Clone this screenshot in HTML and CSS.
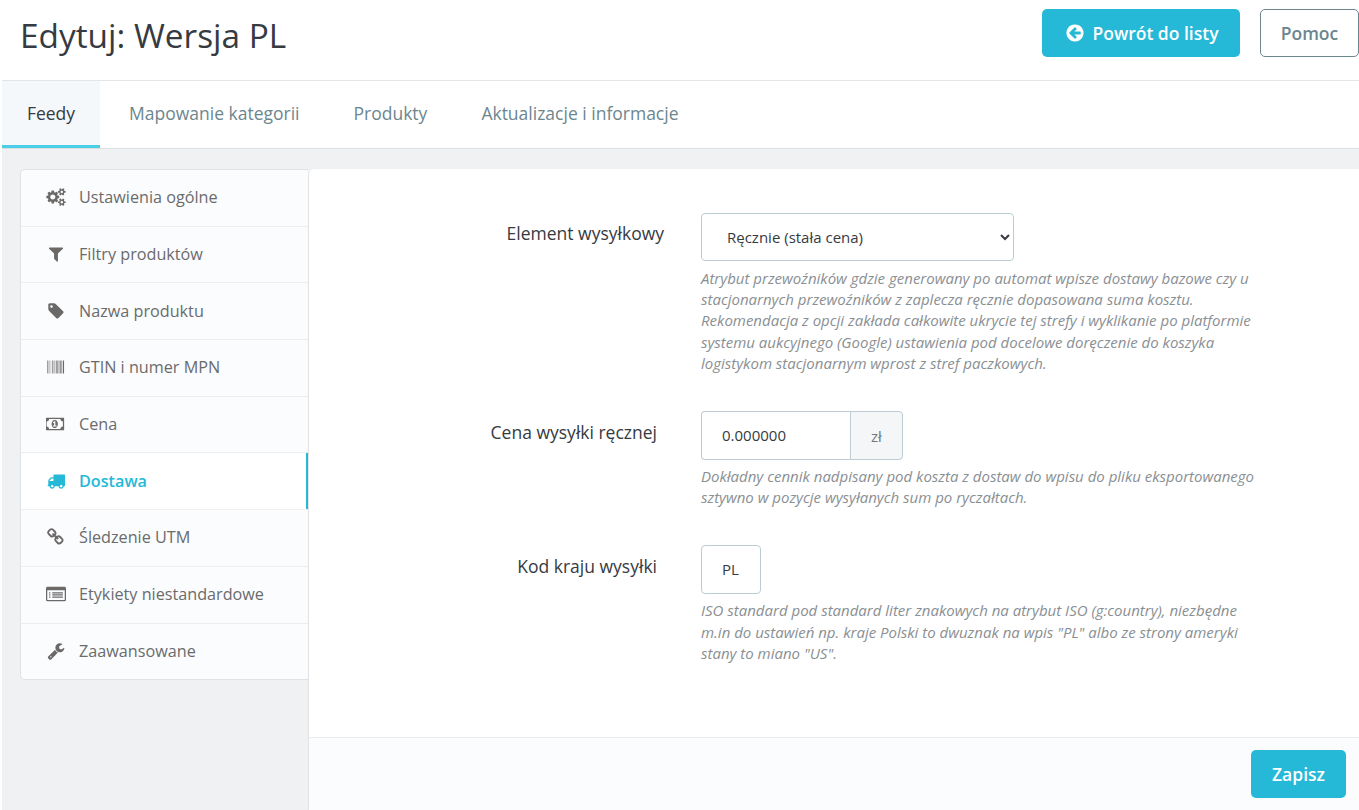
FILE: index.html
```html
<!DOCTYPE html>
<html lang="pl">
<head>
<meta charset="utf-8">
<title>Edytuj: Wersja PL</title>
<link rel="stylesheet" href="styles.css">
</head>
<body>
<div class="page">
  <header class="header">
    <h1 class="title">Edytuj: Wersja PL</h1>
    <div class="actions">
      <a class="btn btn-primary btn-back"><svg class="btn-icon" viewBox="0 0 1792 1792"><path d="M1408 960v-128q0-26-19-45t-45-19h-502l189-189q19-19 19-45t-19-45l-91-91q-18-18-45-18t-45 18l-362 362-91 91q-18 18-18 45t18 45l91 91 362 362q18 18 45 18t45-18l91-91q18-18 18-45t-18-45l-189-189h502q26 0 45-19t19-45zm256-64q0 209-103 385.5t-279.5 279.5-385.5 103-385.5-103-279.5-279.5-103-385.5 103-385.5 279.5-279.5 385.5-103 385.5 103 279.5 279.5 103 385.5z"/></svg>Powrót do listy</a>
      <a class="btn btn-outline">Pomoc</a>
    </div>
  </header>
  <nav class="tabs">
    <a class="tab tab-active">Feedy</a>
    <a class="tab">Mapowanie kategorii</a>
    <a class="tab">Produkty</a>
    <a class="tab">Aktualizacje i informacje</a>
  </nav>
  <main class="content">
    <ul class="side">
      <li class="side-item"><svg class="side-icon" viewBox="0 0 1920 1792"><path d="M896 896q0-106-75-181t-181-75-181 75-75 181 75 181 181 75 181-75 75-181zm768 512q0-52-38-90t-90-38-90 38-38 90q0 53 37.5 90.5t90.5 37.5 90.5-37.5 37.5-90.5zm0-1024q0-52-38-90t-90-38-90 38-38 90q0 53 37.5 90.5t90.5 37.5 90.5-37.5 37.5-90.5zm-384 421v185q0 10-7 19.5t-16 10.5l-155 24q-11 35-32 76 34 48 90 115 7 11 7 20 0 12-7 19-23 30-82.5 89.5t-78.5 59.5q-11 0-21-7l-115-90q-37 19-77 31-11 108-23 155-7 24-30 24h-186q-11 0-20-7.5t-10-17.5l-23-153q-34-10-75-31l-118 89q-7 7-20 7-11 0-21-8-144-133-144-160 0-9 7-19 10-14 41-53t47-61q-23-44-35-82l-152-24q-10-1-17-9.5t-7-19.5v-185q0-10 7-19.5t16-10.5l155-24q11-35 32-76-34-48-90-115-7-11-7-20 0-12 7-20 22-30 82-89t79-59q11 0 21 7l115 90q34-18 77-32 11-108 23-154 7-24 30-24h186q11 0 20 7.5t10 17.5l23 153q34 10 75 31l118-89q8-7 20-7 11 0 21 8 144 133 144 160 0 8-7 19-12 16-42 54t-45 60q23 48 34 82l152 23q10 2 17 10.5t7 19.5zm640 533v140q0 16-149 31-12 27-30 52 51 113 51 138 0 4-4 7-122 71-124 71-8 0-46-47t-52-68q-20 2-30 2t-30-2q-14 21-52 68t-46 47q-2 0-124-71-4-3-4-7 0-25 51-138-18-25-30-52-149-15-149-31v-140q0-16 149-31 13-29 30-52-51-113-51-138 0-4 4-7 4-2 35-20t59-34 30-16q8 0 46 46.5t52 67.5q20-2 30-2t30 2q51-71 92-112l6-2q4 0 124 70 4 3 4 7 0 25-51 138 17 23 30 52 149 15 149 31zm0-1024v140q0 16-149 31-12 27-30 52 51 113 51 138 0 4-4 7-122 71-124 71-8 0-46-47t-52-68q-20 2-30 2t-30-2q-14 21-52 68t-46 47q-2 0-124-71-4-3-4-7 0-25 51-138-18-25-30-52-149-15-149-31v-140q0-16 149-31 13-29 30-52-51-113-51-138 0-4 4-7 4-2 35-20t59-34 30-16q8 0 46 46.5t52 67.5q20-2 30-2t30 2q51-71 92-112l6-2q4 0 124 70 4 3 4 7 0 25-51 138 17 23 30 52 149 15 149 31z"/></svg>Ustawienia ogólne</li>
      <li class="side-item"><svg class="side-icon" viewBox="0 0 1792 1792"><path d="M1595 295q17 41-14 70l-493 493v742q0 42-39 59-13 5-25 5-27 0-45-19l-256-256q-19-19-19-45v-486l-493-493q-31-29-14-70 17-39 59-39h1280q42 0 59 39z"/></svg>Filtry produktów</li>
      <li class="side-item"><svg class="side-icon" viewBox="0 0 1792 1792"><path d="M576 448q0-53-37.5-90.5t-90.5-37.5-90.5 37.5-37.5 90.5 37.5 90.5 90.5 37.5 90.5-37.5 37.5-90.5zm1067 576q0 53-37 90l-491 492q-39 37-91 37-53 0-90-37l-715-716q-38-37-64.5-101t-26.5-117v-416q0-52 38-90t90-38h416q53 0 117 26.5t102 64.5l715 714q37 39 37 91z"/></svg>Nazwa produktu</li>
      <li class="side-item"><svg class="side-icon" viewBox="0 0 1792 1792"><path d="M63 1536h-63v-1280h63v1280zm63-1v-1279h32v1279h-32zm94 0v-1279h31v1279h-31zm157 0v-1279h31v1279h-31zm157 0v-1279h63v1279h-63zm126 0v-1279h31v1279h-31zm63 0v-1279h31v1279h-31zm63 0v-1279h31v1279h-31zm125 0v-1279h63v1279h-63zm126 0v-1279h63v1279h-63zm126 0v-1279h63v1279h-63zm126 0v-1279h63v1279h-63zm94 0v-1279h63v1279h-63zm189 0v-1279h94v1279h-94zm125 1h-63v-1280h63v1280z"/></svg>GTIN i numer MPN</li>
      <li class="side-item"><svg class="side-icon" viewBox="0 0 2048 1792"><path d="M704 1152h384v-96h-128v-448h-114l-148 137 77 80q42-37 55-57h2v288h-128v96zm512-256q0 70-21 142t-59.5 134-101.5 101-138 39-138-39-101.5-101-59.5-134-21-142 21-142 59.5-134 101.5-101 138-39 138 39 101.5 101 59.5 134 21 142zm512 256v-512q-106 0-181-75t-75-181h-1152q0 106-75 181t-181 75v512q106 0 181 75t75 181h1152q0-106 75-181t181-75zm128-832v1152q0 26-19 45t-45 19h-1792q-26 0-45-19t-19-45v-1152q0-26 19-45t45-19h1792q26 0 45 19t19 45z"/></svg>Cena</li>
      <li class="side-item side-active"><svg class="side-icon" viewBox="0 0 1792 1792"><path d="M640 1408q0-52-38-90t-90-38-90 38-38 90 38 90 90 38 90-38 38-90zm-384-512h384v-256h-158q-13 0-22 9l-195 195q-9 9-9 22v30zm1280 512q0-52-38-90t-90-38-90 38-38 90 38 90 90 38 90-38 38-90zm256-1088v1024q0 15-4 26.5t-13.5 18.5-16.5 11.5-23.5 6-22.5 2-25.5 0-22.5-.5q0 106-75 181t-181 75-181-75-75-181h-384q0 106-75 181t-181 75-181-75-75-181h-64q-3 0-22.5.5t-25.5 0-22.5-2-23.5-6-16.5-11.5-13.5-18.5-4-26.5q0-26 19-45t45-19v-320q0-8-.5-35t0-38 2.5-34.5 6.5-37 14-30.5 22.5-30l198-198q19-19 50.5-32t58.5-13h160v-192q0-26 19-45t45-19h1024q26 0 45 19t19 45z"/></svg>Dostawa</li>
      <li class="side-item"><svg class="side-icon" viewBox="0 0 1792 1792"><path d="M1456 1216q0-40-28-68l-208-208q-28-28-68-28-42 0-72 32 3 3 19 18.5t21.5 21.5 15 19 13 25.5 3.5 27.5q0 40-28 68t-68 28q-15 0-27.5-3.5t-25.5-13-19-15-21.5-21.5-18.5-19q-33 31-33 73 0 40 28 68l206 207q27 27 68 27 40 0 68-26l147-146q28-28 28-67zm-703-705q0-40-28-68l-206-207q-28-28-68-28-39 0-68 27l-147 146q-28 28-28 67 0 40 28 68l208 208q27 27 68 27 42 0 72-31-3-3-19-18.5t-21.5-21.5-15-19-13-25.5-3.5-27.5q0-40 28-68t68-28q15 0 27.5 3.5t25.5 13 19 15 21.5 21.5 18.5 19q33-31 33-73zm895 705q0 120-85 203l-147 146q-83 83-203 83-121 0-204-85l-206-207q-83-83-83-203 0-123 88-209l-88-88q-86 88-208 88-120 0-204-84l-208-208q-84-84-84-204t85-203l147-146q83-83 203-83 121 0 204 85l206 207q83 83 83 203 0 123-88 209l88 88q86-88 208-88 120 0 204 84l208 208q84 84 84 204z"/></svg>Śledzenie UTM</li>
      <li class="side-item"><svg class="side-icon" viewBox="0 0 2048 1792"><path fill-rule="evenodd" d="M128 160h1792q53 0 90 38t38 90v1216q0 53-38 90t-90 38h-1792q-53 0-90-38t-38-90v-1216q0-53 38-90t90-38zm0 352v992h1792v-992zm192 192h128v128h-128zm0 224h128v128h-128zm0 224h128v128h-128zm320-448h1088v128h-1088zm0 224h1088v128h-1088zm0 224h1088v128h-1088z"/></svg>Etykiety niestandardowe</li>
      <li class="side-item"><svg class="side-icon" viewBox="0 0 1792 1792"><path d="M448 1472q0-26-19-45t-45-19-45 19-19 45 19 45 45 19 45-19 19-45zm644-420l-682 682q-37 37-90 37-52 0-91-37l-106-108q-38-36-38-90 0-53 38-91l681-681q39 98 114.5 173.5t173.5 114.5zm634-435q0 39-23 106-47 134-164.5 217.5t-258.5 83.5q-185 0-316.5-131.5t-131.5-316.5 131.5-316.5 316.5-131.5q58 0 121.5 16.5t107.5 46.5q16 11 16 28t-16 28l-293 169v224l193 107q5-3 79-48.5t135.5-81 70.5-35.5q15 0 23.5 10t8.5 25z"/></svg>Zaawansowane</li>
    </ul>
    <section class="panel">
      <form class="form">
        <div class="row row-select">
          <label class="label">Element wysyłkowy</label>
          <div class="control">
            <select class="field select"><option>Ręcznie (stała cena)</option></select>
            <p class="help">Atrybut przewoźników gdzie generowany po automat wpisze dostawy bazowe czy u<br>stacjonarnych przewoźników z zaplecza ręcznie dopasowana suma kosztu.<br>Rekomendacja z opcji zakłada całkowite ukrycie tej strefy i wyklikanie po platformie<br>systemu aukcyjnego (Google) ustawienia pod docelowe doręczenie do koszyka<br>logistykom stacjonarnym wprost z stref paczkowych.</p>
          </div>
        </div>
        <div class="row row-price">
          <label class="label">Cena wysyłki ręcznej</label>
          <div class="control">
            <div class="group">
              <input class="field group-input" value="0.000000">
              <span class="addon">zł</span>
            </div>
            <p class="help">Dokładny cennik nadpisany pod koszta z dostaw do wpisu do pliku eksportowanego<br>sztywno w pozycje wysyłanych sum po ryczałtach.</p>
          </div>
        </div>
        <div class="row row-country">
          <label class="label">Kod kraju wysyłki</label>
          <div class="control">
            <input class="field code" value="PL">
            <p class="help">ISO standard pod standard liter znakowych na atrybut ISO (g:country), niezbędne<br>m.in do ustawień np. kraje Polski to dwuznak na wpis "PL" albo ze strony ameryki<br>stany to miano "US".</p>
          </div>
        </div>
      </form>
      <footer class="panel-footer"><a class="btn btn-primary btn-save">Zapisz</a></footer>
    </section>
  </main>
</div>
</body>
</html>
```
FILE: styles.css
```css
* { box-sizing: border-box; }
html, body { margin: 0; height: 100%; }
body { font-family: "Open Sans", "Noto Sans", sans-serif; background: #fff; color: #363a41; overflow: hidden; }
.page { height: 810px; padding-left: 2px; display: flex; flex-direction: column; }

.header { height: 81px; flex: none; display: flex; justify-content: space-between; align-items: flex-start; border-bottom: 1px solid #e3e5e6; }
.title { margin: 13px 0 0 18px; font-size: 33.4px; line-height: 44px; font-weight: 400; color: #363a41; }
.actions { display: flex; gap: 20px; margin-top: 9px; }
.btn { display: flex; align-items: center; justify-content: center; height: 48px; border-radius: 5px; font-size: 17.5px; font-weight: 600; }
.btn-primary { background: #25b9d7; color: #fff; width: 198px; }
.btn-back { padding-left: 2px; }
.btn-outline { width: 99px; border: 1px solid #6c868e; color: #6c868e; }
.btn-icon { width: 20px; height: 20px; fill: #fff; margin-right: 7px; }

.tabs { height: 68px; flex: none; display: flex; border-bottom: 1px solid #dcdfe0; }
.tab { display: flex; align-items: center; justify-content: center; padding: 0 27px 3px; font-size: 17.5px; color: #6c868e; }
.tab-active { width: 98px; padding: 0; margin-right: 2px; color: #363a41; background: #f4f8fb; border-bottom: 3px solid #4bcfe8; }

.content { flex: 1; min-height: 0; display: flex; align-items: stretch; background: #eff1f2; padding: 20px 0 0 18px; }
.side { list-style: none; margin: 0; padding: 0; width: 288px; height: 511px; flex: none; background: #fafcfe; border: 1px solid #dfe3e5; border-right: 0; border-radius: 5px 0 0 5px; }
.side-item { height: 56.7px; display: flex; align-items: center; padding: 0 0 1.2px 25px; font-size: 16.2px; color: #6b6b6b; border-bottom: 1px solid #eceef0; }
.side-item:last-child { border-bottom: 0; }
.side-icon { width: 20px; height: 18px; margin-right: 13px; fill: #6b6868; flex: none; }
.side-active { background: #fff; color: #25b9d7; font-weight: 600; box-shadow: inset -2px 0 0 #25b9d7; }
.side-active .side-icon { fill: #25b9d7; }

.panel { flex: 1; margin-left: 1px; display: flex; flex-direction: column; background: #fff; border-top-left-radius: 5px; box-shadow: 0 1px 2px rgba(0,0,0,.2); }
.form { flex: 1; padding-top: 44px; }
.row { display: flex; }
.row-price { margin-top: 37px; }
.row-country { margin-top: 37px; }
.label { width: 355px; text-align: right; font-size: 17.5px; line-height: 24px; color: #363a41; flex: none; margin-top: 8px; }
.row-price .label, .row-country .label { width: 348px; margin-top: 9px; margin-right: 7px; }
.control { margin-left: 37px; }
.field { font-family: inherit; font-size: 15px; color: #363a41; background: #fff; border: 1px solid #bbcdd2; border-radius: 4px; display: block; outline: 0; }
.select { width: 313px; height: 48px; padding: 0 0 0 21px; }
.help { margin: 7px 0 0; font-size: 15px; line-height: 21.2px; font-style: italic; color: #8a8f93; }
.row-price .help, .row-country .help { margin-top: 6px; }
.group { display: flex; width: 202px; height: 49px; }
.group-input { width: 149px; height: 49px; padding: 0 20px 2px; border-right: 0; border-radius: 4px 0 0 4px; }
.addon { width: 53px; display: flex; align-items: center; justify-content: center; font-size: 15px; background: #f4f6f8; border: 1px solid #bbcdd2; border-radius: 0 4px 4px 0; color: #6c7a80; }
.code { width: 60px; height: 49px; padding: 0 20px 2px; }

.panel-footer { height: 73px; flex: none; background: #fafcfe; border-top: 1px solid #e8eaec; display: flex; justify-content: flex-end; padding: 12px 13px 0 0; }
.btn-save { width: 95px; }
```
